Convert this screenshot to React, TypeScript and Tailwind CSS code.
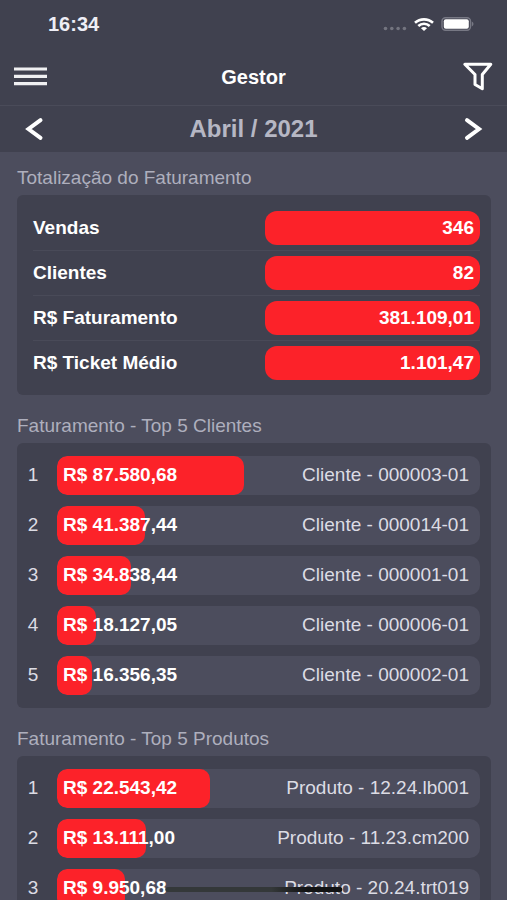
type Ranking = { label: string; value: string; width: string };

const totals = [
  { label: "Vendas", value: "346" },
  { label: "Clientes", value: "82" },
  { label: "R$ Faturamento", value: "381.109,01" },
  { label: "R$ Ticket Médio", value: "1.101,47" },
];

const clients: Ranking[] = [
  { label: "Cliente - 000003-01", value: "R$ 87.580,68", width: "44.2%" },
  { label: "Cliente - 000014-01", value: "R$ 41.387,44", width: "20.9%" },
  { label: "Cliente - 000001-01", value: "R$ 34.838,44", width: "17.6%" },
  { label: "Cliente - 000006-01", value: "R$ 18.127,05", width: "9.2%" },
  { label: "Cliente - 000002-01", value: "R$ 16.356,35", width: "8.3%" },
];

const products: Ranking[] = [
  { label: "Produto - 12.24.lb001", value: "R$ 22.543,42", width: "36.1%" },
  { label: "Produto - 11.23.cm200", value: "R$ 13.111,00", width: "21%" },
  { label: "Produto - 20.24.trt019", value: "R$ 9.950,68", width: "16%" },
];

function StatusBar() {
  return (
    <div className="flex h-12 items-center justify-between pl-12 pr-8 text-[20px] font-bold text-[#eeeef6]">
      <span>16:34</span>
      <div className="flex items-center gap-[7px]">
        <svg width="24" height="14" viewBox="0 0 24 14" fill="#73747f">
          <circle cx="2.5" cy="11.5" r="1.8" />
          <circle cx="8.8" cy="11.5" r="1.8" />
          <circle cx="15.1" cy="11.5" r="1.8" />
          <circle cx="21.4" cy="11.5" r="1.8" />
        </svg>
        <svg width="20" height="13" viewBox="0 0 20 13" fill="none" stroke="#fff" strokeWidth="2.6">
          <path d="M1 4.8C6 .2 14 .2 19 4.8" />
          <path d="M4.3 8c3.2-3 8.2-3 11.4 0" />
          <path d="M10 13 7 10.2c1.6-1.5 4.4-1.5 6 0Z" fill="#fff" stroke="none" />
        </svg>
        <svg width="34" height="14" viewBox="0 0 34 14">
          <rect x="1" y="0.75" width="28.5" height="12.5" rx="3.5" fill="none" stroke="#777884" strokeWidth="1.4" />
          <rect x="2.8" y="2.3" width="25" height="9.4" rx="2" fill="#fff" />
          <path d="M30.8 4.6c2.2.8 2.2 4 0 4.8Z" fill="#777884" />
        </svg>
      </div>
    </div>
  );
}

function Header() {
  return (
    <header className="bg-[#40414f]">
      <StatusBar />
      <div className="grid h-[58px] grid-cols-[1fr_auto_1fr] items-center border-b border-[#4a4b59] px-[14px]">
        <button aria-label="Menu" className="justify-self-start">
          <svg width="33" height="20" viewBox="0 0 33 20" stroke="#f0f0f2" strokeWidth="3.2">
            <path d="M0 2h33M0 9.3h33M0 16.6h33" />
          </svg>
        </button>
        <h1 className="text-[20px] font-bold text-white">Gestor</h1>
        <button aria-label="Filtrar" className="justify-self-end">
          <svg width="31" height="30" viewBox="0 0 31 30" fill="none" stroke="#fff" strokeWidth="3" strokeLinejoin="round">
            <path d="M2.8 2.2h26L20.3 12.5v14.2L13 22.5v-10Z" />
          </svg>
        </button>
      </div>
      <div className="flex h-[46px] items-center justify-between px-6">
        <button aria-label="Mês anterior">
          <svg width="20" height="24" viewBox="0 0 20 24" fill="none" stroke="#fff" strokeWidth="4" strokeLinecap="round">
            <path d="M16.5 3.2 4.5 12l12 8.8" />
          </svg>
        </button>
        <h2 className="text-[24px] font-bold text-[#b6b7c4]">Abril / 2021</h2>
        <button aria-label="Próximo mês">
          <svg width="20" height="24" viewBox="0 0 20 24" fill="none" stroke="#fff" strokeWidth="4" strokeLinecap="round">
            <path d="m4 3.2 12 8.8-12 8.8" />
          </svg>
        </button>
      </div>
    </header>
  );
}

function SectionTitle({ children }: { children: string }) {
  return <h3 className="mb-[5px] text-[19px] leading-6 text-[#aeafbd]">{children}</h3>;
}

function Totals() {
  return (
    <section>
      <SectionTitle>Totalização do Faturamento</SectionTitle>
      <dl className="rounded-md bg-[#40414f] pb-[9px] pl-4 pr-[11px] pt-[11px]">
        {totals.map((t) => (
          <div key={t.label} className="flex items-center justify-between border-b border-[#494a58] py-[5px] last:border-transparent">
            <dt className="text-[19px] font-bold text-white">{t.label}</dt>
            <dd className="flex h-[34px] w-[48%] items-center justify-end rounded-xl bg-[#fc2229] pr-[6px] text-[19px] font-bold text-white">
              {t.value}
            </dd>
          </div>
        ))}
      </dl>
    </section>
  );
}

function RankingList({ title, items }: { title: string; items: Ranking[] }) {
  return (
    <section>
      <SectionTitle>{title}</SectionTitle>
      <ol className="flex flex-col gap-[11px] rounded-md bg-[#40414f] py-[13px] pr-[11px]">
        {items.map((item, i) => (
          <li key={item.label} className="flex items-center text-[19px]">
            <span className="w-8 text-center text-[#dcdce4]">{i + 1}</span>
            <div className="relative ml-2 h-[39px] flex-1 overflow-hidden rounded-[10px] bg-[#4c4d5d]">
              <div className="absolute inset-y-0 left-0 rounded-[10px] bg-[#fc2229]" style={{ width: item.width }} />
              <div className="relative flex h-full items-center justify-between pl-[6px] pr-[11px]">
                <span className="font-bold text-white">{item.value}</span>
                <span className="text-[#dcdce4]">{item.label}</span>
              </div>
            </div>
          </li>
        ))}
      </ol>
    </section>
  );
}

export default function App() {
  return (
    <div className="relative flex h-screen flex-col overflow-hidden bg-[#4c4d5d] font-['Liberation_Sans',Arial,sans-serif]">
      <Header />
      <main className="flex flex-1 flex-col gap-[19px] pl-[17px] pr-4 pt-[14px]">
        <Totals />
        <RankingList title="Faturamento - Top 5 Clientes" items={clients} />
        <RankingList title="Faturamento - Top 5 Produtos" items={products} />
      </main>
      {/* home indicator */}
      <div className="absolute bottom-2 left-1/2 h-[5px] w-[35%] -translate-x-1/2 rounded-full bg-linear-to-r from-[#343839] from-60% to-[#121314] to-80%" />
    </div>
  );
}
